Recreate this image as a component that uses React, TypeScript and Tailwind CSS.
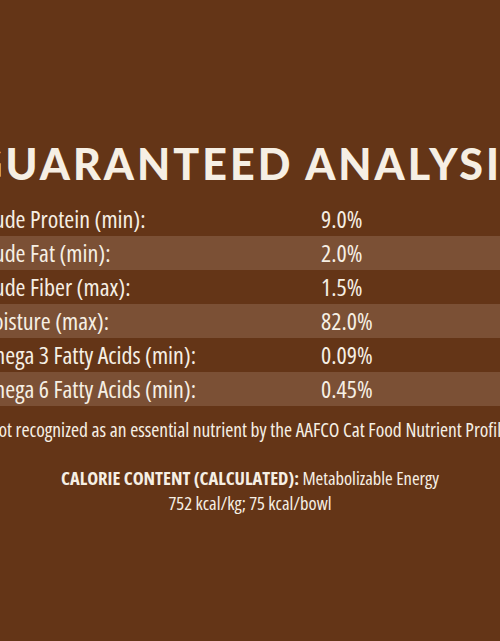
import React from "react";

const rows = [
  { label: "Crude Protein (min):", value: "9.0%" },
  { label: "Crude Fat (min):", value: "2.0%" },
  { label: "Crude Fiber (max):", value: "1.5%" },
  { label: "Moisture (max):", value: "82.0%" },
  { label: "Omega 3 Fatty Acids (min):", value: "0.09%" },
  { label: "Omega 6 Fatty Acids (min):", value: "0.45%" },
];

const narrow = { fontFamily: '"Open Sans", sans-serif' };

export default function App() {
  return (
    <div className="w-[500px] h-[641px] overflow-hidden bg-[#643517] text-[#f6efe4]">
      <div className="w-[600px] -ml-[50px] flex flex-col items-center pt-[136px]">
        {/* heading */}
        <h1
          className="whitespace-nowrap text-[43px] leading-[56px] font-black tracking-[0.07em]"
          style={{ fontFamily: '"Lato", "Inter", sans-serif' }}
        >
          GUARANTEED ANALYSIS
        </h1>

        {/* analysis table */}
        <div className="w-full mt-[10px] flex flex-col font-stretch-[75%]" style={narrow}>
          {rows.map((row, i) => (
            <div
              key={row.label}
              className={`h-[34px] flex items-center text-[24px] ${i % 2 === 1 ? "bg-[#7b5035]" : ""}`}
            >
              <span className="w-[371px] pl-[26px] whitespace-nowrap">{row.label}</span>
              <span className="whitespace-nowrap">{row.value}</span>
            </div>
          ))}
        </div>

        {/* footnote */}
        <p className="mt-[9px] whitespace-nowrap text-[19.5px] leading-[30px] font-stretch-[75%]" style={narrow}>
          *Not recognized as an essential nutrient by the AAFCO Cat Food Nutrient Profiles.
        </p>

        <div className="mt-[20px] text-center text-[18.5px] leading-[25px] font-stretch-[75%]" style={narrow}>
          <p>
            <span className="font-bold">CALORIE CONTENT (CALCULATED):</span> Metabolizable Energy
          </p>
          <p>752 kcal/kg; 75 kcal/bowl</p>
        </div>
      </div>
    </div>
  );
}
